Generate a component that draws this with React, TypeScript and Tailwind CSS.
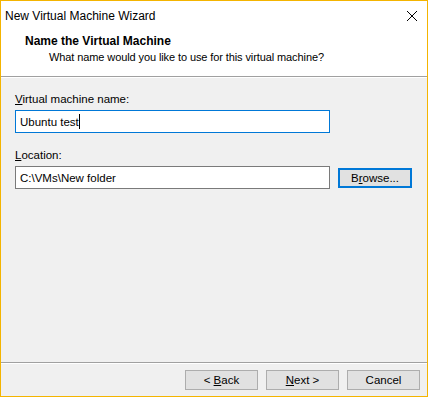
export default function App() {
  return (
    <div className="w-[428px] h-[397px] border border-[#f4b400] bg-[#f0f0f0] flex flex-col font-['Liberation_Sans',sans-serif] text-[11.5px] leading-[16px] text-black">
      {/* Title bar */}
      <div className="h-[30px] bg-white flex items-center justify-between pl-[4px] pr-[9px] text-[12px]">
        <span>New Virtual Machine Wizard</span>
        <svg width="12" height="12" viewBox="0 0 12 12" className="text-black">
          <path d="M1 1 L11 11 M11 1 L1 11" stroke="currentColor" strokeWidth="1" />
        </svg>
      </div>

      {/* Header */}
      <div className="h-[46px] bg-white border-b border-[#a0a0a0] pt-[2px]">
        <div className="pl-[24px] font-bold text-[12px]">Name the Virtual Machine</div>
        <div className="pl-[48px] text-[11px] tracking-[-0.1px]">
          What name would you like to use for this virtual machine?
        </div>
      </div>
      <div className="h-px bg-white" />

      {/* Body */}
      <div className="flex-1 px-[14px] pt-[13px]">
        <div>
          <span className="underline">V</span>irtual machine name:
        </div>
        <div className="mt-[3px] w-[315px] h-[23px] bg-white border border-[#0078d7] flex items-center px-[4px]">
          <span>Ubuntu test</span>
          <span className="w-px h-[15px] bg-black" />
        </div>

        <div className="mt-[14px]">
          <span className="underline">L</span>ocation:
        </div>
        <div className="mt-[3px] flex items-center gap-[8px]">
          <div className="w-[315px] h-[23px] bg-white border border-[#7a7a7a] flex items-center px-[4px]">
            C:\VMs\New folder
          </div>
          <button className="w-[74px] h-[20px] mt-[1px] bg-[#e1e1e1] border-2 border-[#0078d7] flex items-center justify-center">
            B<span className="underline">r</span>owse...
          </button>
        </div>
      </div>

      {/* Footer */}
      <div className="border-t border-[#a0a0a0]">
        <div className="h-px bg-white" />
        <div className="h-[32px] flex justify-end items-start gap-[8px] pt-[6px] pr-[7px]">
          <button className="w-[73px] h-[20px] bg-[#e1e1e1] border border-[#adadad] flex items-center justify-center">
            &lt; <span className="underline ml-[3px]">B</span>ack
          </button>
          <button className="w-[73px] h-[20px] bg-[#e1e1e1] border border-[#adadad] flex items-center justify-center">
            <span className="underline">N</span>ext &gt;
          </button>
          <button className="w-[73px] h-[20px] bg-[#e1e1e1] border border-[#adadad] flex items-center justify-center">
            Cancel
          </button>
        </div>
      </div>
    </div>
  )
}
